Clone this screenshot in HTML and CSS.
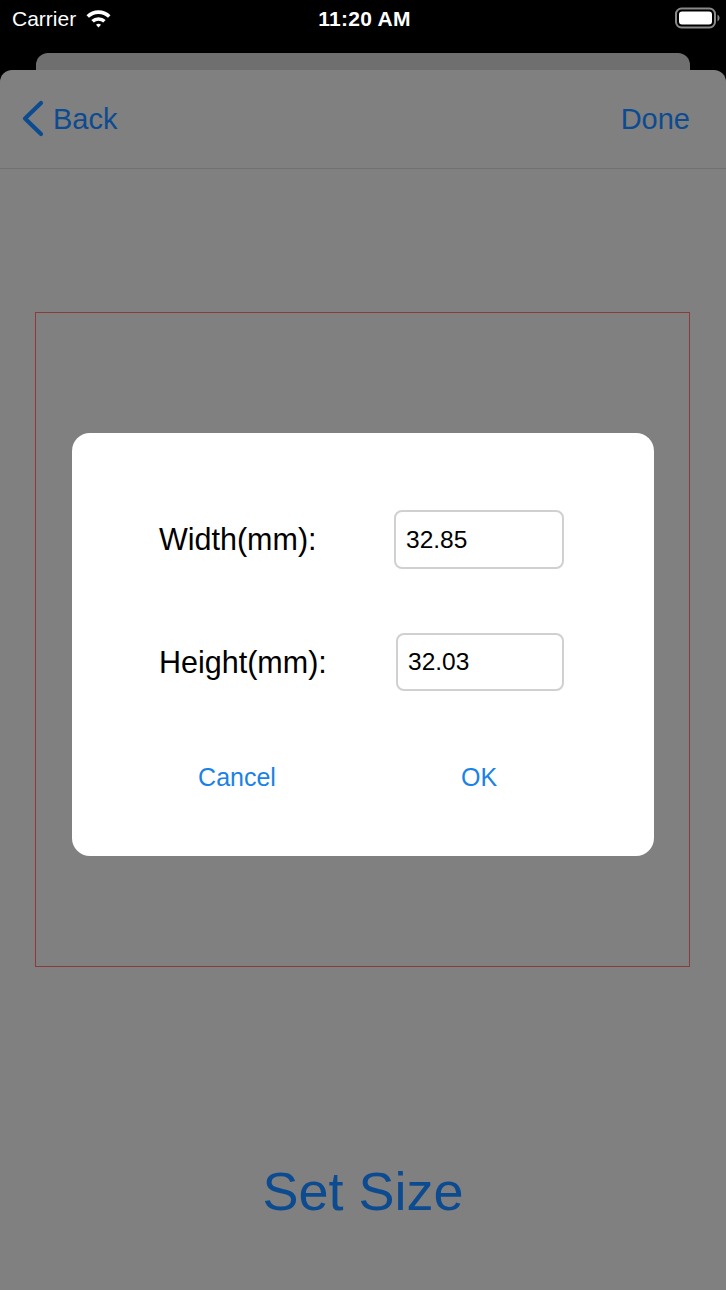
FILE: index.html
```html
<!DOCTYPE html>
<html lang="en">
<head>
    <meta charset="UTF-8">
    <meta name="viewport" content="width=device-width, initial-scale=1.0">
    <title>Set Size</title>
    <link rel="stylesheet" href="styles.css">
</head>
<body>
    <div class="status-bar">
        <div class="status-left">
            <span class="carrier">Carrier</span>
            <svg class="wifi" width="27" height="20" viewBox="0 0 27 20">
                <path d="M1.5 7.2 A17 17 0 0 1 25.5 7.2 L23 9.8 A13.5 13.5 0 0 0 4 9.8 Z" fill="#fff"/>
                <path d="M6.3 12 A10.5 10.5 0 0 1 20.7 12 L18.2 14.6 A7 7 0 0 0 8.8 14.6 Z" fill="#fff"/>
                <path d="M11 16.8 A4 4 0 0 1 16 16.8 L13.5 19.4 Z" fill="#fff"/>
            </svg>
        </div>
        <div class="status-time">11:20 AM</div>
        <div class="status-right">
            <svg class="battery" width="46" height="22" viewBox="0 0 46 22">
                <rect x="1" y="1.5" width="39" height="19" rx="5.5" fill="none" stroke="#8a8a8a" stroke-width="2"/>
                <rect x="4" y="4.5" width="33" height="13" rx="3" fill="#fff"/>
                <path d="M42.5 7.5 A4 4 0 0 1 42.5 14.5 Z" fill="#8a8a8a"/>
            </svg>
        </div>
    </div>

    <div class="back-card"></div>

    <div class="sheet">
        <nav class="navbar">
            <a class="nav-back" href="#">
                <svg class="chevron" width="24" height="38" viewBox="0 0 24 38">
                    <path d="M20 3 L4 18.5 L20 34" fill="none" stroke="#0d4b91" stroke-width="4.2" stroke-linecap="round" stroke-linejoin="round"/>
                </svg>
                <span>Back</span>
            </a>
            <a class="nav-done" href="#">Done</a>
        </nav>

        <div class="canvas-frame"></div>

        <div class="set-size">Set Size</div>
    </div>

    <div class="dialog">
        <div class="dialog-row">
            <label class="dialog-label">Width(mm):</label>
            <div class="dialog-input">32.85</div>
        </div>
        <div class="dialog-row">
            <label class="dialog-label">Height(mm):</label>
            <div class="dialog-input dialog-input-narrow">32.03</div>
        </div>
        <div class="dialog-buttons">
            <button class="dialog-button">Cancel</button>
            <button class="dialog-button">OK</button>
        </div>
    </div>
</body>
</html>
```

FILE: styles.css
```css
* {
    margin: 0;
    padding: 0;
    box-sizing: border-box;
}

body {
    background-color: #000;
    font-family: "Liberation Sans", Arial, sans-serif;
    width: 726px;
    height: 1290px;
    overflow: hidden;
    position: relative;
    display: flex;
    flex-direction: column;
}

.status-bar {
    height: 53px;
    display: flex;
    align-items: flex-start;
    justify-content: space-between;
    padding: 6px 5px 0 12px;
    color: #fff;
}

.status-left {
    display: flex;
    align-items: center;
    gap: 9px;
    width: 150px;
}

.carrier {
    font-size: 21px;
    line-height: 26px;
}

.wifi {
    margin-top: -3px;
}

.status-time {
    font-size: 21px;
    font-weight: bold;
    line-height: 26px;
    letter-spacing: 0.3px;
    margin-left: -4px;
}

.status-right {
    width: 150px;
    display: flex;
    justify-content: flex-end;
    padding-top: 1px;
}

.back-card {
    height: 17px;
    margin: 0 36px;
    background-color: #6f6f6f;
    border-radius: 12px 12px 0 0;
}

.sheet {
    flex: 1;
    background-color: #808080;
    border-radius: 12px 12px 0 0;
    display: flex;
    flex-direction: column;
}

.navbar {
    height: 99px;
    border-bottom: 1px solid #707070;
    display: flex;
    justify-content: space-between;
    align-items: center;
    padding: 0 36px 0 21px;
}

.navbar a {
    color: #0d4b91;
    text-decoration: none;
    font-size: 29px;
}

.nav-back {
    display: flex;
    align-items: center;
    gap: 8px;
}

.canvas-frame {
    margin: 143px 36px 0 35px;
    height: 655px;
    border: 1px solid #8a3c3c;
}

.set-size {
    margin-top: 193px;
    text-align: center;
    color: #0d4b91;
    font-size: 54px;
    line-height: 62px;
}

/* modal dialog over the page */
.dialog {
    position: absolute;
    left: 72px;
    top: 433px;
    width: 582px;
    height: 423px;
    background-color: #fff;
    border-radius: 18px;
    padding: 77px 90px 0 87px;
    display: flex;
    flex-direction: column;
    gap: 64px;
}

.dialog-row {
    display: flex;
    justify-content: space-between;
    align-items: center;
}

.dialog-label {
    font-size: 30.5px;
    color: #000;
}

.dialog-input {
    width: 170px;
    height: 59px;
    border: 2px solid #d0d0d0;
    border-radius: 8px;
    font-size: 24.5px;
    color: #000;
    display: flex;
    align-items: center;
    padding-left: 10px;
}

.dialog-input-narrow {
    width: 168px;
    height: 58px;
}

.dialog-buttons {
    display: flex;
    margin: 8px 0 0 -87px;
    padding-left: 44px;
}

.dialog-button {
    flex: 0 0 242px;
    background: none;
    border: none;
    font-family: "Liberation Sans", Arial, sans-serif;
    font-size: 25px;
    color: #1a82e6;
    text-align: center;
}
```
